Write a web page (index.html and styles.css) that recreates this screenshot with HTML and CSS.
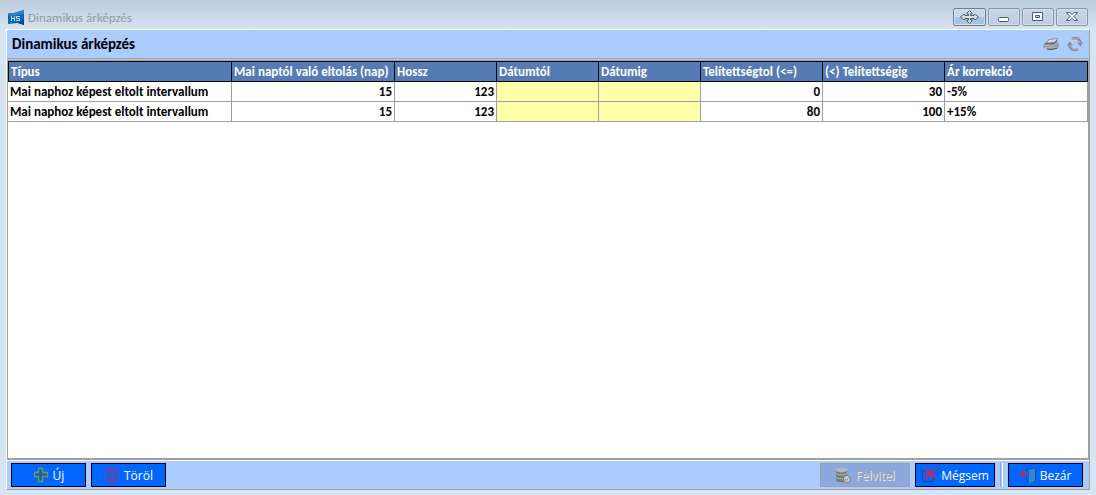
FILE: index.html
```html
<!DOCTYPE html>
<html lang="hu">
<head>
<meta charset="utf-8">
<title>Dinamikus árképzés</title>
<link rel="stylesheet" href="styles.css">
</head>
<body>
<div class="window">
  <header class="titlebar">
    <svg class="app-icon" width="16" height="16" viewBox="0 0 16 16" aria-hidden="true">
      <path d="M0 3L6 3L16 0V15L10 13L0 14Z" fill="#0b67ae"/>
      <path d="M0 3L6 3L16 0V4L5 6L0 5Z" fill="#2287c8"/>
      <path d="M10 13L16 9V15Z" fill="#07467e"/>
      <path d="M3.500 6V11M6.500 6V11M3.500 8.500H6.500M12 6.500H8.500V8.500H11.500V10.500H8" fill="none" stroke="#b4dcf5"/>
    </svg>
    <span class="caption">Dinamikus árképzés</span>
    <div class="window-buttons">
      <button class="win-btn win-btn-active" aria-label="Mozgatás">
        <svg width="19" height="14" viewBox="0 0 19 14"><path d="M9.500 .5L12 3V4H10.500V5.500H14V4.500H15.500L18.500 7L15.500 9.500H14V8.500H10.500V10H12V11L9.500 13.500L7 11V10H8.500V8.500H5V9.500H3.500L.5 7L3.500 4.500H5V5.500H8.500V4H7V3Z" fill="#deded8" stroke="#50586b"/></svg>
      </button>
      <button class="win-btn" aria-label="Kis méret">
        <svg width="12" height="12" viewBox="0 0 12 12"><rect x=".5" y="6.500" width="10" height="4" rx="1" fill="#fff" stroke="#50586b"/></svg>
      </button>
      <button class="win-btn" aria-label="Teljes méret">
        <svg width="12" height="12" viewBox="0 0 12 12"><path d="M.5 1.500H10.500V9.500H.5ZM3.500 4.500V6.500H7.500V4.500Z" fill="#fff" fill-rule="evenodd" stroke="#50586b"/></svg>
      </button>
      <button class="win-btn" aria-label="Bezárás">
        <svg width="12" height="12" viewBox="0 0 12 12"><path d="M.5 1.500H4L6 3.700L8 1.500H11.500L8 5.500L11.500 9.500H8L6 7.300L4 9.500H.5L4 5.500Z" fill="#fff" stroke="#50586b"/></svg>
      </button>
    </div>
  </header>

  <main class="panel">
    <div class="toolbar">
      <h1 class="heading">Dinamikus árképzés</h1>
      <button class="tool" aria-label="Nyomtatás">
        <svg width="16" height="14" viewBox="0 0 16 14"><path d="M1 7L6 2L15 1L14 5L16 7L15 11L6 13L0 10Z" fill="#8e9196"/><path d="M6 3L14 2L12 5L4 6Z" fill="#d6d9de"/><path d="M1 8.500L9 9L15 7M2 10.500L8 11L14 10" fill="none" stroke="#b9bcbf"/><path d="M3 6.500L11 6L14 3.500M4 12.300L8 12.500L14 11.300" fill="none" stroke="#55585d"/></svg>
      </button>
      <button class="tool" aria-label="Frissítés">
        <svg width="16" height="16" viewBox="0 0 16 16"><path d="M5 3C8 .8 12.500 2 13.500 7M11 13C8 15.200 3.500 14 2.500 9" fill="none" stroke="#85878c" stroke-width="2.500"/><path d="M10 6.500H16L13.500 10.500ZM0 9.500L2.500 5.500L6 9.500Z" fill="#85878c"/><path d="M5 3.200C8 1.500 12 2.500 13 7.500M11 12.800C8 14.500 4 13.500 3 8.500" fill="none" stroke="#b3b6bb"/></svg>
      </button>
    </div>

    <div class="grid">
      <table class="rates">
        <colgroup><col class="c-type"><col class="c-offset"><col class="c-date"><col class="c-date"><col class="c-date"><col class="c-fill"><col class="c-fill"><col></colgroup>
        <thead>
          <tr><th>Típus</th><th>Mai naptól való eltolás (nap)</th><th>Hossz</th><th>Dátumtól</th><th>Dátumig</th><th>Telítettségtol (&lt;=)</th><th>(&lt;) Telítettségig</th><th>Ár korrekció</th></tr>
        </thead>
        <tbody>
          <tr><td>Mai naphoz képest eltolt intervallum</td><td class="num">15</td><td class="num">123</td><td class="empty"></td><td class="empty"></td><td class="num">0</td><td class="num">30</td><td>-5%</td></tr>
          <tr><td>Mai naphoz képest eltolt intervallum</td><td class="num">15</td><td class="num">123</td><td class="empty"></td><td class="empty"></td><td class="num">80</td><td class="num">100</td><td>+15%</td></tr>
        </tbody>
      </table>
    </div>

    <footer class="actions">
      <button class="btn">
        <svg width="16" height="16" viewBox="0 0 16 16"><path d="M5.500 1.500H9.500V5.500H14.500V9.500H9.500V14.500H5.500V9.500H1.500V5.500H5.500Z" fill="#1560b0" stroke="#6f9c48" stroke-width="1.300"/></svg>
        Új
      </button>
      <button class="btn">
        <svg width="16" height="18" viewBox="0 0 16 18" shape-rendering="crispEdges"><path d="M3.500 5V16.500H12.500V5M2 4.500H14M5.500 4V2.500H10.500V4M6.500 7V15M9.500 7V15" fill="none" stroke="#b02a55"/></svg>
        Töröl
      </button>
      <span class="spacer"></span>
      <button class="btn btn-wide" disabled>
        <svg width="16" height="16" viewBox="0 0 16 16"><path d="M1 3V13C1 16 12 16 12 13V3Z" fill="#777a7e"/><ellipse cx="6.500" cy="3" rx="5.500" ry="2.500" fill="#b5b7ba"/><path d="M1 6C2 8.500 11 8.500 12 6M1 10C2 12.500 11 12.500 12 10" fill="none" stroke="#b8babc"/><circle cx="12" cy="12" r="3.500" fill="#d0d2d4" stroke="#777a7e"/><path d="M10 12L11.500 13.500L14 10.500" fill="none" stroke="#777a7e"/></svg>
        Felvitel
      </button>
      <button class="btn btn-mid">
        <svg width="16" height="16" viewBox="0 0 16 16"><path d="M5 3.500H1.500V14.500H12.500V11" fill="none" stroke="#1c4a91"/><path d="M4 2C7 4 11 8 15 11.500M15 1.500C10 4 7 8 4 12" fill="none" stroke="#cf2449" stroke-width="2.200"/></svg>
        Mégsem
      </button>
      <span class="divider"></span>
      <button class="btn">
        <svg width="16" height="16" viewBox="0 0 16 16"><path d="M6.500 5V1.500H15.500V14.500H6.500V10" fill="none" stroke="#174c95"/><path d="M9 3L15 1V14L9 16Z" fill="#2b8cca"/><path d="M0 7L4 3V6H8V8H4V11Z" fill="#d32448"/></svg>
        Bezár
      </button>
    </footer>
  </main>
</div>
</body>
</html>
```
FILE: styles.css
```css
* { box-sizing: border-box; }

body {
  margin: 0;
  font-family: Carlito, Lato, "Noto Sans", sans-serif;
  font-size: 13px;
  color: #000;
}

button { font: inherit; margin: 0; padding: 0; }
svg { display: block; flex: none; }

.window {
  display: flex;
  flex-direction: column;
  height: 100vh;
  padding: 0 6px 5px;
  background: linear-gradient(#bccbdc 0, #d7e4f2 30px);
}

.titlebar {
  display: flex;
  align-items: center;
  gap: 4px;
  height: 29px;
  padding: 6px 2px 0;
}

.caption { color: #93999f; }

.window-buttons {
  display: flex;
  align-self: flex-start;
  gap: 2px;
  margin-left: auto;
  padding-top: 2px;
}

.win-btn {
  display: flex;
  align-items: center;
  justify-content: center;
  width: 32px;
  height: 18px;
  border: 1px solid #8697ad;
  border-radius: 2px;
  background: linear-gradient(#c8d6e6, #bccde0);
  box-shadow: inset 0 0 0 1px #d3dfec;
}

.win-btn-active {
  width: 33px;
  border-color: #66809f;
  background: linear-gradient(#c5d9ee 50%, #a7c3df 50%);
}

.panel {
  display: flex;
  flex: 1;
  flex-direction: column;
  border: 1px solid #a0a0a0;
  border-top-color: #fff;
  border-left-color: #fff;
  background: #aaccff;
}

.toolbar {
  display: flex;
  align-items: center;
  gap: 8px;
  height: 29px;
  padding: 0 6px 0 5px;
  border-bottom: 1px solid #a0a0a0;
}

.heading { flex: 1; margin: 0; font-size: 15px; font-weight: 700; }

.tool { border: 0; background: none; }

.grid {
  flex: 1;
  margin-top: 1px;
  border: 1px solid #a0a0a0;
  border-bottom-width: 2px;
  background: #fff;
}

.rates {
  width: 100%;
  table-layout: fixed;
  border-collapse: separate;
  border-spacing: 0;
  font-weight: 700;
}

.c-type { width: 224px; }
.c-offset { width: 163px; }
.c-date { width: 102px; }
.c-fill { width: 122px; }

.rates th,
.rates td {
  height: 20px;
  padding: 0 2px;
  border-right: 1px solid #a0a0a0;
  border-bottom: 1px solid #a0a0a0;
  line-height: 18px;
  text-align: left;
  white-space: nowrap;
}

.rates th {
  height: 21px;
  border-color: #000;
  border-top: 1px solid #000;
  background: #557bb5;
  color: #fff;
}

.rates th:first-child { border-left: 1px solid #000; }
.rates .num { text-align: right; }
.rates .empty { background: #ffffaa; }

.actions {
  display: flex;
  align-items: flex-start;
  gap: 5px;
  height: 29px;
  padding: 2px 6px 0 4px;
  border-top: 1px solid #fff;
}

.btn {
  display: flex;
  align-items: center;
  justify-content: center;
  gap: 4px;
  width: 75px;
  height: 24px;
  border: 1px solid #000;
  background: #0066ff;
  color: #fff;
  font-family: "Open Sans", "Noto Sans", sans-serif;
  font-size: 12px;
}

.btn-mid { width: 80px; }
.btn-wide { width: 90px; }

.btn:disabled {
  border-color: #a0a0a0;
  background: #8aaadd;
  color: #a4a6aa;
  text-shadow: 1px 1px 0 #e4e8ee;
}

.spacer { flex: 1; }

.divider {
  width: 3px;
  height: 24px;
  border-left: 1px solid #a0a0a0;
  border-right: 1px solid #fff;
}
```
